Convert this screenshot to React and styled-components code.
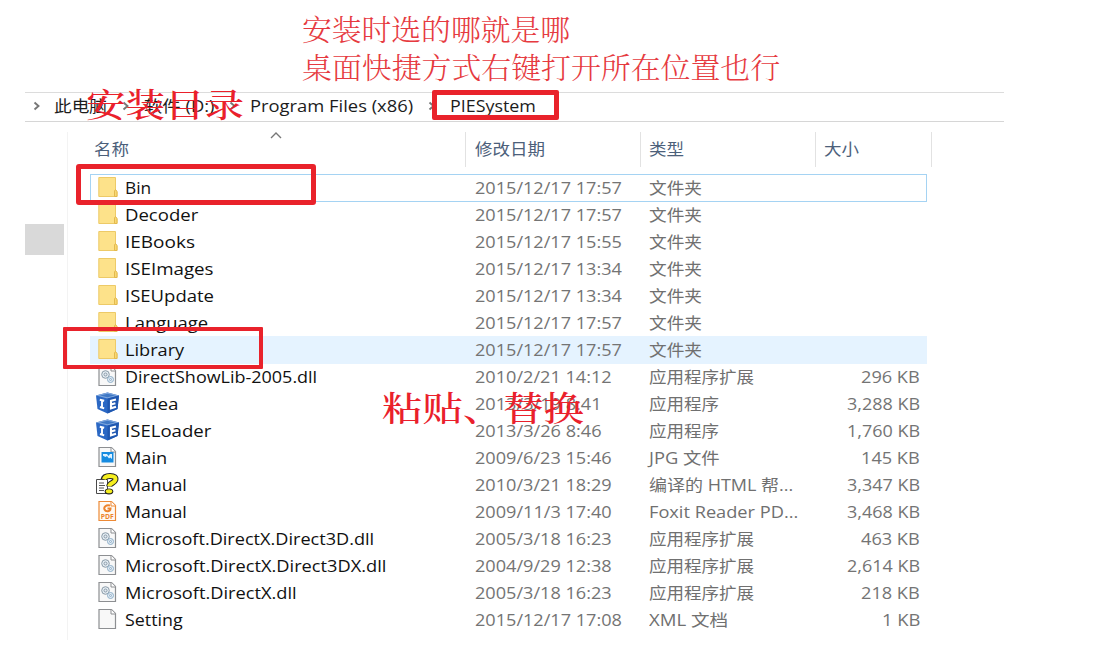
import React, { useLayoutEffect, useRef, useState } from 'react';
import styled, { createGlobalStyle } from 'styled-components';

const Global = createGlobalStyle`
  * { box-sizing: border-box; }
  body { margin: 0; background: #fff; overflow: hidden; }
`;

const Page = styled.main`
  position: relative;
  width: 1093px;
  height: 662px;
  padding: 92px 0 0 25px;
  overflow: hidden;
  background: #fff;
  font-family: 'Open Sans', 'Noto Sans CJK SC', sans-serif;
  font-size: 16px;
  color: #1c1c1c;
`;

const FitBox = styled.span`
  display: block;
  width: ${(p) => p.$width}px;
  height: ${(p) => p.$line}px;
  line-height: ${(p) => p.$line}px;
  white-space: nowrap;
  flex: none;
`;

const FitInner = styled.span`
  display: inline-block;
  transform-origin: 0 50%;
`;

/* Stretches a label horizontally so that it fills the given width. */
function Fit({ width, line = 27, children }) {
  const ref = useRef(null);
  const [scale, setScale] = useState(1);
  useLayoutEffect(() => {
    setScale(width / ref.current.offsetWidth);
  }, [width, children]);
  return (
    <FitBox $width={width} $line={line}>
      <FitInner ref={ref} style={{ transform: `scaleX(${scale})` }}>{children}</FitInner>
    </FitBox>
  );
}

const PathBar = styled.nav`
  display: flex;
  align-items: center;
  width: 979px;
  height: 30px;
  padding: 0 0 2px 8px;
  border-top: 1px solid #dcdcdc;
  border-bottom: 1px solid #d6d6d6;
`;

const Crumb = styled.span`
  margin-left: ${(p) => p.$gap}px;
`;

const Chevron = styled.svg`
  width: 8px;
  height: 10px;
  flex: none;
  margin-left: ${(p) => p.$gap || 0}px;
  fill: none;
  stroke: #777;
  stroke-width: 1.9;
`;

const Body = styled.div`
  display: flex;
  height: 520px;
`;

const Sidebar = styled.aside`
  width: 43px;
  height: 508px;
  margin-top: 10px;
  padding-top: 92px;
  border-right: 1px solid #f3f3f3;
`;

const SideBlock = styled.div`
  width: 39px;
  height: 31px;
  background: #d9d9d9;
`;

const List = styled.section`
  width: 865px;
  padding-left: 22px;
`;

const Header = styled.header`
  display: flex;
  height: 52px;
  padding-top: 10px;
  color: #4c607a;
`;

const HeadCell = styled.div`
  position: relative;
  width: ${(p) => p.$width}px;
  height: 35px;
  padding: 4px 0 0 ${(p) => p.$pad}px;
  border-right: 1px solid #e2e2e2;
`;

const SortMark = styled.svg`
  position: absolute;
  left: 180px;
  top: 0;
  width: 12px;
  height: 7px;
  fill: none;
  stroke: #777;
  stroke-width: 1.4;
`;

const Row = styled.div`
  display: flex;
  align-items: center;
  width: 837px;
  height: 28px;
  margin-bottom: -1px;
  padding-top: 1px;
  background: ${(p) => (p.$mode === 'hover' ? '#e5f3ff' : 'transparent')};
  box-shadow: ${(p) => (p.$mode === 'focus' ? 'inset 0 0 0 1px #a5d3f3' : 'none')};
`;

const IconCell = styled.div`
  display: flex;
  width: 35px;
  padding: 0 0 3px 5px;
`;

const NameCell = styled.div`
  width: 350px;
  color: #111;
`;

const DateCell = styled.div`
  width: 174px;
  color: #747474;
`;

const TypeCell = styled.div`
  width: 161px;
  color: #707070;
`;

const SizeCell = styled.div`
  display: flex;
  justify-content: flex-end;
  width: 110px;
  color: #747474;
`;

const Glyph = styled.svg`
  width: 26px;
  height: 24px;
  display: block;
`;

const Frame = styled.div`
  position: absolute;
  left: ${(p) => p.$x}px;
  top: ${(p) => p.$y}px;
  width: ${(p) => p.$w}px;
  height: ${(p) => p.$h}px;
  border: ${(p) => p.$b}px solid #e9222b;
  border-radius: ${(p) => p.$r}px;
`;

const Note = styled.div`
  position: absolute;
  left: ${(p) => p.$x}px;
  top: ${(p) => p.$y}px;
  color: ${(p) => p.$color || '#ea202b'};
  font-family: 'Noto Serif CJK SC', 'Noto Sans CJK SC', serif;
  font-size: ${(p) => p.$size}px;
  font-weight: ${(p) => p.$weight || 300};
`;

const Folder = () => (
  <Glyph viewBox="0 0 26 24">
    <path d="M3.8 2.5H20.5V15L22 17V21.5H3.8Z" fill="#fde28a" stroke="#edca67" />
    <path d="M19.5 21.5V16L20.5 14.5L22 16.5V21.5Z" fill="#f8d873" stroke="#e3b94d" />
  </Glyph>
);

const Sheet = ({ stroke = '#8d8f92', fill = '#f8f8f8', children }) => (
  <Glyph viewBox="0 0 26 24">
    <path d="M4 2.5H16.5L20.5 6.5V21.5H4Z" fill={fill} stroke={stroke} strokeWidth="1.2" />
    <path d="M16 2.5V7H20.5" fill="#fff" stroke={stroke} />
    {children}
  </Glyph>
);

const Dll = () => (
  <Sheet>
    <g fill="#e5edf3" stroke="#8b9ba8">
      <circle cx="10.5" cy="10.5" r="3.8" />
      <circle cx="10.5" cy="10.5" r="1.5" />
      <circle cx="15.5" cy="15.5" r="3" stroke="#8eafca" />
      <circle cx="15.5" cy="15.5" r="1" stroke="#8eafca" />
    </g>
  </Sheet>
);

const Cube = () => (
  <Glyph viewBox="0 0 26 24">
    <path d="M1 4.5L12.5 1.5L24 4.5L22.5 18L12.5 22.5L2.5 18Z" fill="#2b68c4" />
    <path d="M1 4.5L12.5 1.5L24 4.5L12.5 7.5Z" fill="#7ea6dc" />
    <path d="M5 4.5L12.5 2.7L20 4.5L12.5 6.2Z" fill="#3f78c5" />
    <path d="M12.5 7.5L24 4.5L22.5 18L12.5 22.5Z" fill="#1f57b0" />
    <path d="M4.8 8.8L9.2 9.7M7 9.5V16.8M5 16L9.2 17.4" fill="none" stroke="#fff" strokeWidth="1.9" />
    <path d="M21 8.6L16 9.8V17.3L21 15.8M16 13.4L20.4 12.3" fill="none" stroke="#fff" strokeWidth="2.1" />
  </Glyph>
);

const Picture = () => (
  <Sheet>
    <rect x="6.5" y="7" width="12" height="10.5" fill="#168be0" />
    <path d="M8 9H17V14L15.3 12.5L14 13.5L12 11L10.5 12L8 10.8Z" fill="#dff2ff" />
    <path d="M12 9H15L13.5 11Z" fill="#168be0" />
  </Sheet>
);

const Help = () => (
  <Glyph viewBox="0 0 26 24">
    <path d="M1.5 7.5H12.5V21.5H1.5Z" fill="#fff" stroke="#4a4a4a" />
    <path d="M4 11H9M4 13.5H10M4 16H9M4 18.5H9" stroke="#555" />
    <path d="M8.6 7.5C9 4.8 12 4 15 4C19.5 4 21 5.5 20.3 8C19.5 11 14.5 11 14.2 14.6" fill="none" stroke="#222" strokeWidth="6" />
    <ellipse cx="14" cy="19.4" rx="4.3" ry="3" fill="#222" />
    <path d="M9 7.3C9.6 4.8 12 4 15 4C19.5 4 21 5.5 20.3 8C19.5 11 14.5 11 14.2 14.2" fill="none" stroke="#f5ee1f" strokeWidth="4" />
    <ellipse cx="14" cy="19.3" rx="3.2" ry="2" fill="#f5ee1f" />
  </Glyph>
);

const PdfText = styled.text`
  font: 700 6.5px 'Open Sans', sans-serif;
  fill: #ed842d;
`;

const Pdf = () => (
  <Sheet stroke="#ed8a36" fill="#fffaf4">
    <path d="M15 6.5C11 5.5 8.5 8 9.5 10.5C11 13.5 15.5 12.5 15.5 9.5H12.5" fill="none" stroke="#ed842d" strokeWidth="2" />
    <PdfText x="5.8" y="20" textLength="13" lengthAdjust="spacingAndGlyphs">PDF</PdfText>
  </Sheet>
);

const icons = { folder: Folder, dll: Dll, cube: Cube, picture: Picture, help: Help, pdf: Pdf, sheet: Sheet };

const files = [
  ['folder', 'Bin', 26, '2015/12/17 17:57', 147, '文件夹', 53],
  ['folder', 'Decoder', 73, '2015/12/17 17:57', 147, '文件夹', 53],
  ['folder', 'IEBooks', 70, '2015/12/17 15:55', 147, '文件夹', 53],
  ['folder', 'ISEImages', 89, '2015/12/17 13:34', 147, '文件夹', 53],
  ['folder', 'ISEUpdate', 89, '2015/12/17 13:34', 147, '文件夹', 53],
  ['folder', 'Language', 83, '2015/12/17 17:57', 147, '文件夹', 53],
  ['folder', 'Library', 59, '2015/12/17 17:57', 147, '文件夹', 53],
  ['dll', 'DirectShowLib-2005.dll', 192, '2010/2/21 14:12', 137, '应用程序扩展', 105, '296 KB', 59],
  ['cube', 'IEIdea', 54, '2013/3/19 8:41', 127, '应用程序', 70, '3,288 KB', 73],
  ['cube', 'ISELoader', 86, '2013/3/26 8:46', 127, '应用程序', 70, '1,760 KB', 73],
  ['picture', 'Main', 42, '2009/6/23 15:46', 137, 'JPG 文件', 71, '145 KB', 59],
  ['help', 'Manual', 62, '2010/3/21 18:29', 137, '编译的 HTML 帮...', 144, '3,347 KB', 73],
  ['pdf', 'Manual', 62, '2009/11/3 17:40', 137, 'Foxit Reader PD...', 149, '3,468 KB', 73],
  ['dll', 'Microsoft.DirectX.Direct3D.dll', 249, '2005/3/18 16:23', 137, '应用程序扩展', 105, '463 KB', 59],
  ['dll', 'Microsoft.DirectX.Direct3DX.dll', 261, '2004/9/29 12:38', 137, '应用程序扩展', 105, '2,614 KB', 73],
  ['dll', 'Microsoft.DirectX.dll', 172, '2005/3/18 16:23', 137, '应用程序扩展', 105, '218 KB', 59],
  ['sheet', 'Setting', 58, '2015/12/17 17:08', 147, 'XML 文档', 79, '1 KB', 38],
];

const Arrow = ({ gap }) => (
  <Chevron $gap={gap} viewBox="0 0 8 10"><path d="M1.5 1.5L5.5 5L1.5 8.5" /></Chevron>
);

export default function App() {
  return (
    <Page>
      <Global />
      <PathBar>
        <Arrow />
        <Crumb $gap={13}><Fit width={53}>此电脑</Fit></Crumb>
        <Arrow gap={15} />
        <Crumb $gap={14}><Fit width={70}>软件 (D:)</Fit></Crumb>
        <Arrow gap={15} />
        <Crumb $gap={13}><Fit width={163}>Program Files (x86)</Fit></Crumb>
        <Arrow gap={15} />
        <Crumb $gap={14}><Fit width={86}>PIESystem</Fit></Crumb>
      </PathBar>
      <Body>
        <Sidebar><SideBlock /></Sidebar>
        <List>
          <Header>
            <HeadCell $width={376} $pad={4}>
              <Fit width={35}>名称</Fit>
              <SortMark viewBox="0 0 12 7"><path d="M1 6L6 1L11 6" /></SortMark>
            </HeadCell>
            <HeadCell $width={175} $pad={9}><Fit width={70}>修改日期</Fit></HeadCell>
            <HeadCell $width={175} $pad={8}><Fit width={35}>类型</Fit></HeadCell>
            <HeadCell $width={116} $pad={8}><Fit width={35}>大小</Fit></HeadCell>
          </Header>
          {files.map(([icon, name, nameW, date, dateW, type, typeW, size, sizeW], i) => {
            const Icon = icons[icon];
            return (
              <Row key={i} $mode={i === 0 ? 'focus' : i === 6 ? 'hover' : 'none'}>
                <IconCell><Icon /></IconCell>
                <NameCell><Fit width={nameW}>{name}</Fit></NameCell>
                <DateCell><Fit width={dateW}>{date}</Fit></DateCell>
                <TypeCell><Fit width={typeW}>{type}</Fit></TypeCell>
                {size && <SizeCell><Fit width={sizeW}>{size}</Fit></SizeCell>}
              </Row>
            );
          })}
        </List>
      </Body>
      <Note $x={302} $y={10} $size={29} $color="#e63a40">
        <Fit width={268} line={38}>安装时选的哪就是哪</Fit>
        <Fit width={478} line={38}>桌面快捷方式右键打开所在位置也行</Fit>
      </Note>
      <Note $x={86} $y={83} $size={33} $weight={500}><Fit width={158} line={40}>安装目录</Fit></Note>
      <Note $x={382} $y={387} $size={34} $weight={500}><Fit width={202} line={40}>粘贴、替换</Fit></Note>
      <Frame $x={432} $y={90} $w={127} $h={30} $b={5} $r={2} />
      <Frame $x={76} $y={164} $w={240} $h={41} $b={5} $r={3} />
      <Frame $x={63} $y={327} $w={200} $h={42} $b={4} $r={1} />
    </Page>
  );
}
